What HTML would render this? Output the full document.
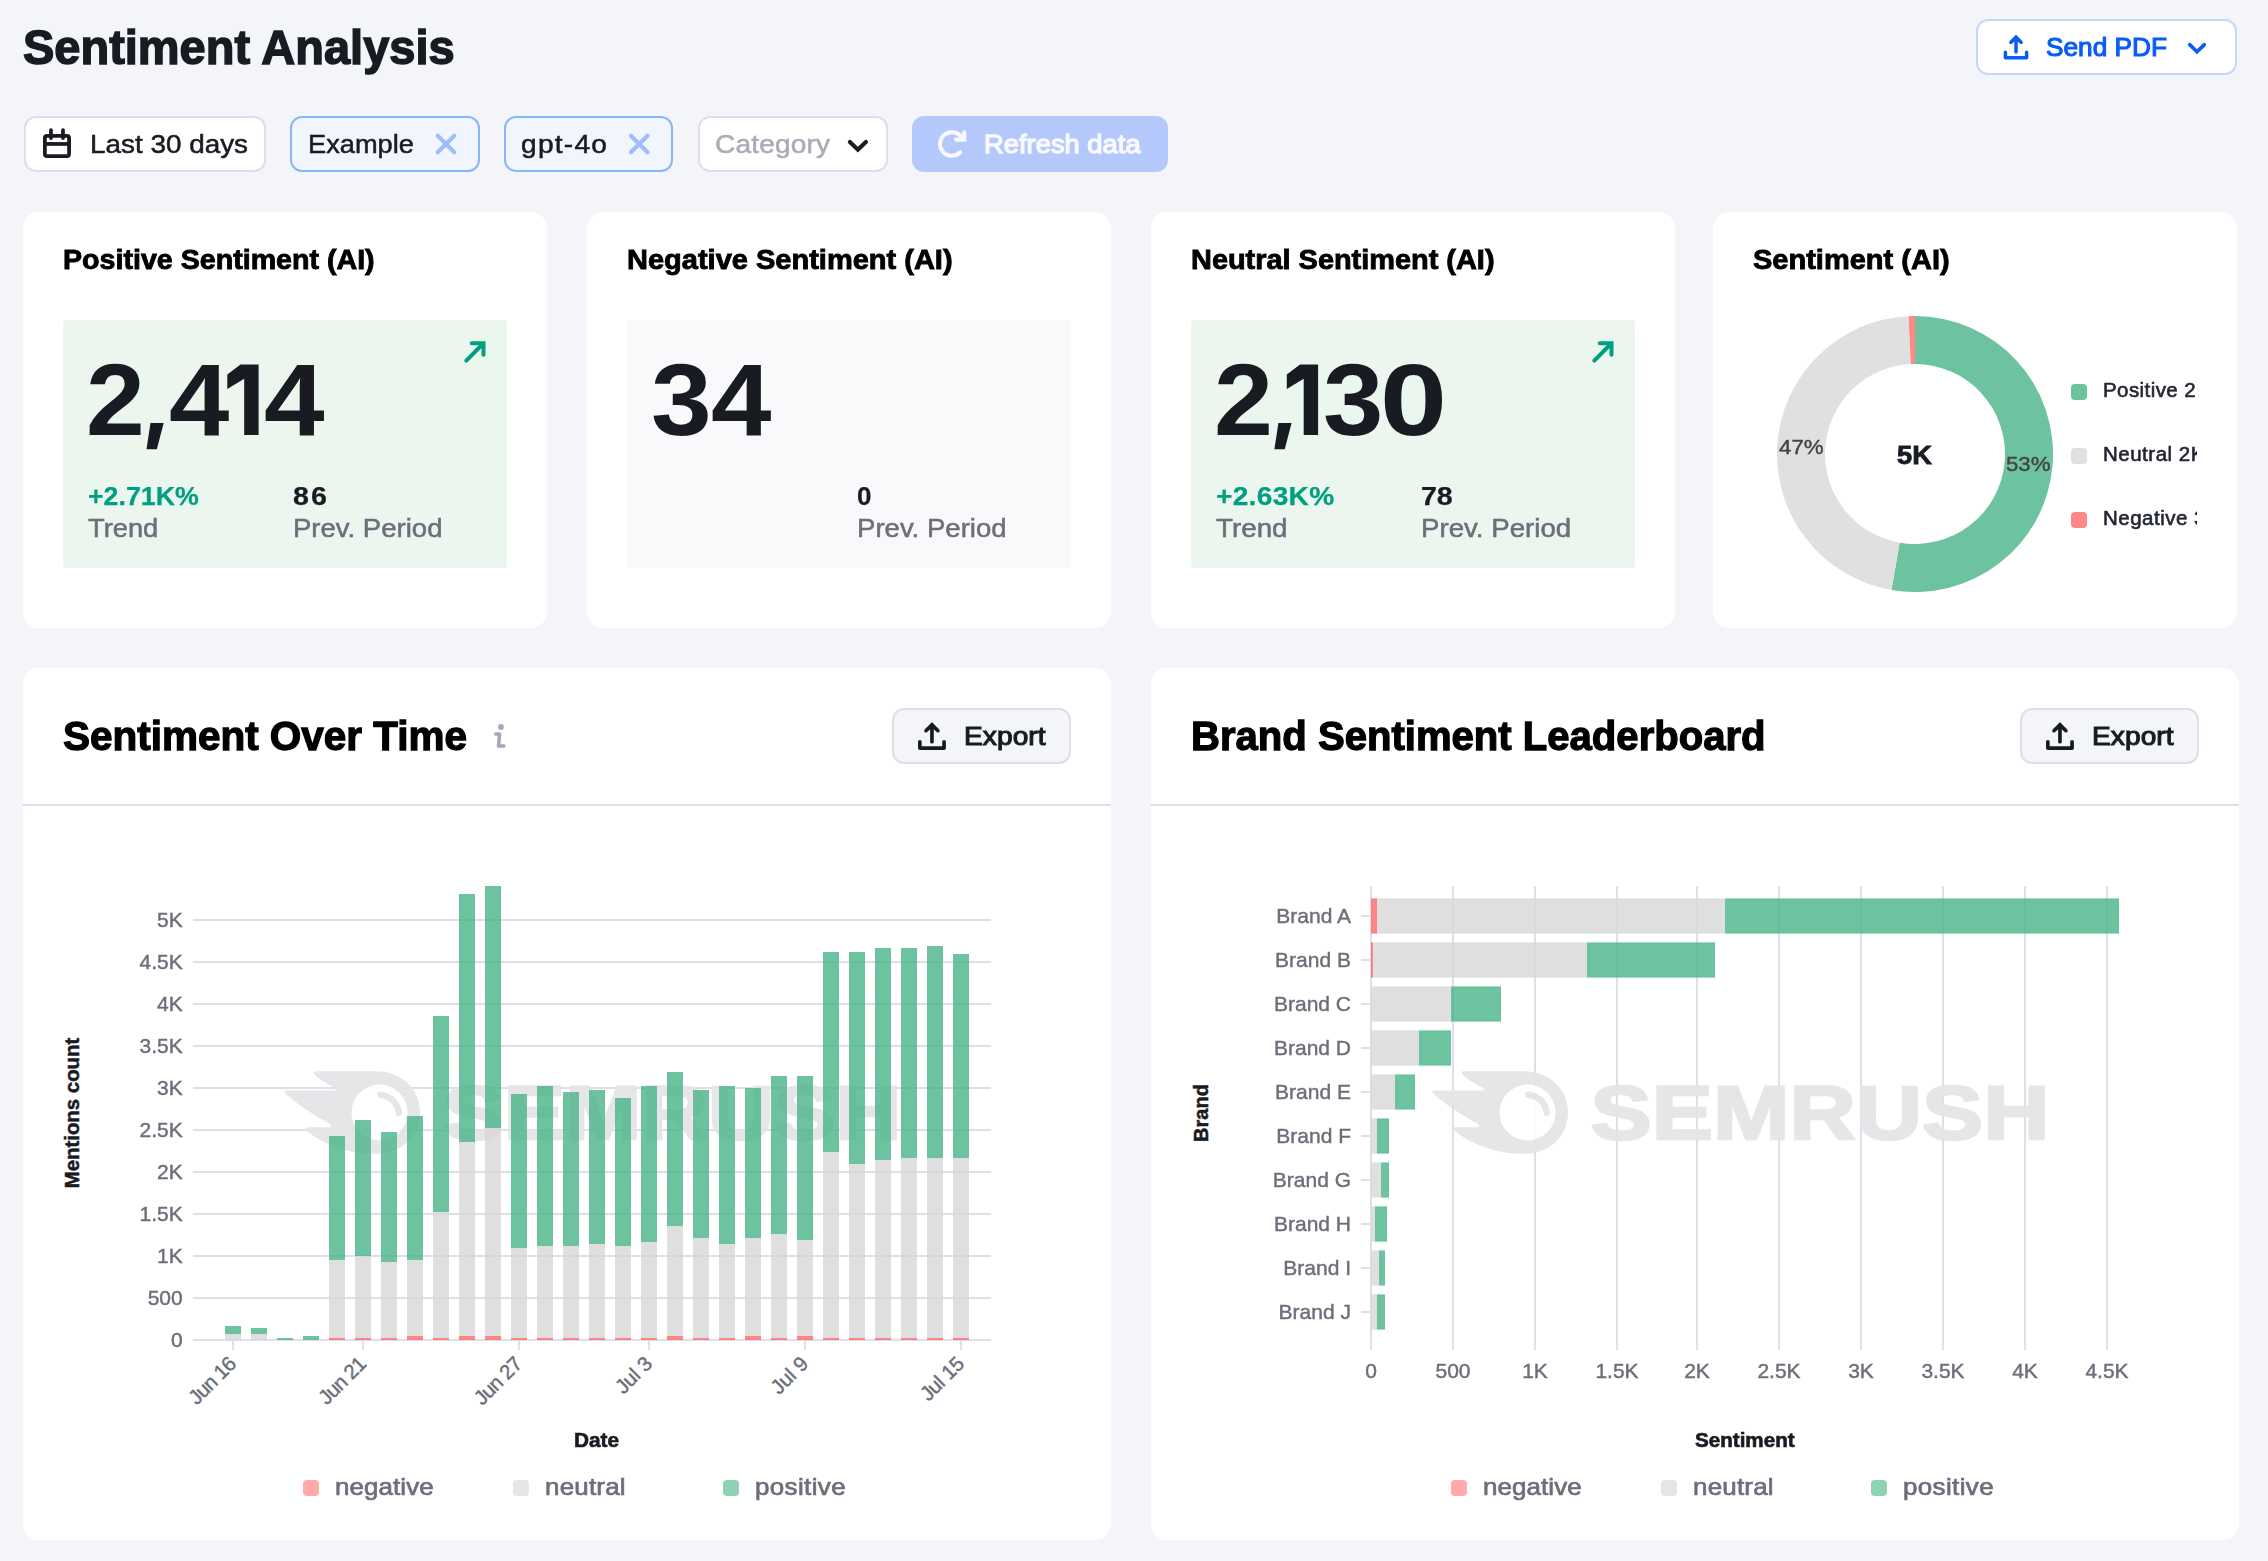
<!DOCTYPE html>
<html lang="en"><head><meta charset="utf-8"><title>Sentiment Analysis</title>
<style>
html,body{margin:0;padding:0}
body{width:2268px;height:1561px;background:#f4f5f9;position:relative;overflow:hidden;font-family:"Liberation Sans", sans-serif}
.b{position:absolute}
.t{position:absolute;white-space:pre;line-height:1}
svg.ov{position:absolute;left:0;top:0}
svg.ov text{font-family:"Liberation Sans", sans-serif}
</style></head><body>
<div class="b" style="left:1976px;top:19px;width:261px;height:56px;background:#fff;border-radius:12px;border:2px solid #c5d8fb;box-sizing:border-box;"></div>
<div class="b" style="left:23.5px;top:116px;width:242.0px;height:56px;background:#fff;border-radius:12px;border:2px solid #dedee8;box-sizing:border-box;"></div>
<div class="b" style="left:290px;top:116px;width:190px;height:56px;background:#f1f5fd;border-radius:12px;border:2px solid #8cb4fa;box-sizing:border-box;"></div>
<div class="b" style="left:504px;top:116px;width:169px;height:56px;background:#f1f5fd;border-radius:12px;border:2px solid #8cb4fa;box-sizing:border-box;"></div>
<div class="b" style="left:697.5px;top:116px;width:190.0px;height:56px;background:#fff;border-radius:12px;border:2px solid #dedee8;box-sizing:border-box;"></div>
<div class="b" style="left:912px;top:116px;width:256px;height:56px;background:#b4c8fb;border-radius:12px;"></div>
<div class="b" style="left:23px;top:212px;width:524px;height:416px;background:#fff;border-radius:16px;"></div>
<div class="b" style="left:587px;top:212px;width:524px;height:416px;background:#fff;border-radius:16px;"></div>
<div class="b" style="left:1151px;top:212px;width:524px;height:416px;background:#fff;border-radius:16px;"></div>
<div class="b" style="left:1713px;top:212px;width:524px;height:416px;background:#fff;border-radius:16px;"></div>
<div class="b" style="left:63px;top:320px;width:444px;height:248px;background:#eaf6ee;border-radius:4px;"></div>
<div class="b" style="left:627px;top:320px;width:444px;height:248px;background:#f9f9fb;border-radius:4px;"></div>
<div class="b" style="left:1191px;top:320px;width:444px;height:248px;background:#eaf6ee;border-radius:4px;"></div>
<div class="b" style="left:23px;top:668px;width:1088px;height:872px;background:#fff;border-radius:16px;"></div>
<div class="b" style="left:1151px;top:668px;width:1088px;height:872px;background:#fff;border-radius:16px;"></div>
<div class="b" style="left:23px;top:804px;width:1088px;height:2px;background:#dedfea;border-radius:0px;"></div>
<div class="b" style="left:1151px;top:804px;width:1088px;height:2px;background:#dedfea;border-radius:0px;"></div>
<div class="b" style="left:892px;top:708px;width:179px;height:56px;background:#f4f5f9;border-radius:12px;border:2px solid #dedfe9;box-sizing:border-box;"></div>
<div class="b" style="left:2020px;top:708px;width:179px;height:56px;background:#f4f5f9;border-radius:12px;border:2px solid #dedfe9;box-sizing:border-box;"></div>
<svg class="ov" width="2268" height="1561" viewBox="0 0 2268 1561">
<g transform="translate(2003.8,34.9) scale(0.875)" fill="none" stroke="#0a5cf5" stroke-width="4.0" stroke-linecap="round"><path d="M1.85 19.75V26H26.05V19.75" stroke-linejoin="round"/><path d="M13.95 3V19.6"/><path d="M7.7 8.9L13.95 2.65L20.2 8.9" stroke-linejoin="miter" stroke-linecap="butt"/><path d="M7.7 8.9L13.95 2.65L20.2 8.9" stroke-linejoin="miter" stroke-linecap="round" stroke-width="3.2"/></g>
<path d="M2189.7 44.6L2197 51.7L2204.3 44.6" fill="none" stroke="#0a5cf5" stroke-width="3.6" stroke-linecap="round" stroke-linejoin="miter"/>
<g fill="none" stroke="#191b23" stroke-width="3.75"><rect x="44.87" y="135.87" width="24.2" height="20.3" rx="2.2"/><path d="M44.8 143.95h24.4"/><path d="M50.96 130v8.1M63 130v8.1" stroke-linecap="round"/></g>
<path d="M437.7 135.7L454.3 152.3M454.3 135.7L437.7 152.3" stroke="#9dbefa" stroke-width="4.2" stroke-linecap="round" fill="none"/>
<path d="M630.9000000000001 135.7L647.5 152.3M647.5 135.7L630.9000000000001 152.3" stroke="#9dbefa" stroke-width="4.2" stroke-linecap="round" fill="none"/>
<path d="M849.9 142l8 7.7 8-7.7" fill="none" stroke="#191b23" stroke-width="4.2" stroke-linecap="round" stroke-linejoin="miter"/>
<g fill="none" stroke="#f8faff" stroke-width="4.1" stroke-linecap="round"><path d="M962.3 138.6A11.8 11.8 0 1 0 960.2 152.3"/><path d="M964.3 132.2V139.6H956" stroke-linejoin="miter"/></g>
<polygon points="150.5,423.0 163.7,423.0 156.8,449.2 146.5,449.2" fill="#191b23"/>
<polygon points="240.5,364.6 258.6,364.6 258.6,435.1 244.2,435.1 244.2,378.7 227.3,389.0 227.3,374.6" fill="#191b23"/>
<polygon points="1278.4,423.0 1291.6,423.0 1284.7,449.2 1274.4,449.2" fill="#191b23"/>
<polygon points="1300.0,364.6 1318.1,364.6 1318.1,435.1 1303.7,435.1 1303.7,378.7 1286.8,389.0 1286.8,374.6" fill="#191b23"/>
<path d="M466.3 360.7L483.3 343.5M471.8 343.3H483.5V354.8" fill="none" stroke="#009f80" stroke-width="4" stroke-linecap="round" stroke-linejoin="miter"/>
<path d="M1594.3 360.7L1611.3 343.5M1599.8 343.3H1611.5V354.8" fill="none" stroke="#009f80" stroke-width="4" stroke-linecap="round" stroke-linejoin="miter"/>
<path d="M1915.00 316.00A138 138 0 1 1 1891.44 589.97L1899.64 542.68A90 90 0 1 0 1915.00 364.00Z" fill="#6dc3a0"/>
<path d="M1891.44 589.97A138 138 0 0 1 1908.56 316.15L1910.80 364.10A90 90 0 0 0 1899.64 542.68Z" fill="#e0e0e0"/>
<path d="M1908.56 316.15A138 138 0 0 1 1915.00 316.00L1915.00 364.00A90 90 0 0 0 1910.80 364.10Z" fill="#ff8786"/>
<rect x="2071" y="384" width="16" height="16" rx="4" fill="#6dc3a0"/>
<rect x="2071" y="448" width="16" height="16" rx="4" fill="#e0e0e0"/>
<rect x="2071" y="512" width="16" height="16" rx="4" fill="#ff8786"/>
<g transform="translate(918,722.1) scale(1)" fill="none" stroke="#191b23" stroke-width="3.7" stroke-linecap="round"><path d="M1.85 19.75V26H26.05V19.75" stroke-linejoin="round"/><path d="M13.95 3V19.6"/><path d="M7.7 8.9L13.95 2.65L20.2 8.9" stroke-linejoin="miter" stroke-linecap="butt"/><path d="M7.7 8.9L13.95 2.65L20.2 8.9" stroke-linejoin="miter" stroke-linecap="round" stroke-width="2.9600000000000004"/></g>
<g transform="translate(2046,722.1) scale(1)" fill="none" stroke="#191b23" stroke-width="3.7" stroke-linecap="round"><path d="M1.85 19.75V26H26.05V19.75" stroke-linejoin="round"/><path d="M13.95 3V19.6"/><path d="M7.7 8.9L13.95 2.65L20.2 8.9" stroke-linejoin="miter" stroke-linecap="butt"/><path d="M7.7 8.9L13.95 2.65L20.2 8.9" stroke-linejoin="miter" stroke-linecap="round" stroke-width="2.9600000000000004"/></g>
<g fill="none" stroke="#a5a8b6" stroke-width="3.6" stroke-linecap="round" stroke-linejoin="round"><circle cx="500.96" cy="727" r="2.9" fill="#a5a8b6" stroke="none"/><path d="M495.7 734h3.9l-1.1 11.95h5.4"/></g>
<rect x="193" y="1339" width="798" height="2" fill="#dedfea"/>
<rect x="193" y="1297" width="798" height="2" fill="#dedfea"/>
<rect x="193" y="1255" width="798" height="2" fill="#dedfea"/>
<rect x="193" y="1213" width="798" height="2" fill="#dedfea"/>
<rect x="193" y="1171" width="798" height="2" fill="#dedfea"/>
<rect x="193" y="1129" width="798" height="2" fill="#dedfea"/>
<rect x="193" y="1087" width="798" height="2" fill="#dedfea"/>
<rect x="193" y="1045" width="798" height="2" fill="#dedfea"/>
<rect x="193" y="1003" width="798" height="2" fill="#dedfea"/>
<rect x="193" y="961" width="798" height="2" fill="#dedfea"/>
<rect x="193" y="919" width="798" height="2" fill="#dedfea"/>
<g transform="translate(284,1071.2)" fill="#e5e5e7" opacity="0.93"><path d="M31 0 H92 C118 0 136 18 136 41.3 C136 64.6 118 82.6 92 82.6 C62 82.6 38 72 21 58.5 L22.5 56 H45 Q49 55.5 46 52.8 C28 43 12 32 0.5 21.5 Q-0.5 19.3 2.5 19.3 H50 Q54 18.5 50 15.8 C44 13 36 9 30.5 3 Q29 0 31 0 Z"/><circle cx="95.5" cy="41.3" r="28" fill="#fff"/><path d="M96.5 23.5 C107 25 113.5 32 114.8 41.5" fill="none" stroke="#e5e5e7" stroke-width="6.5" stroke-linecap="round"/><text x="158.5" y="67.6" font-family='"Liberation Sans", sans-serif' font-weight="700" font-size="76" textLength="459" lengthAdjust="spacingAndGlyphs" stroke="#e5e5e7" stroke-width="2.4">SEMRUSH</text></g>
<g opacity="0.8"><rect x="225" y="1334" width="16" height="6" fill="#d8d8d8"/><rect x="225" y="1326" width="16" height="8" fill="#49b488"/><rect x="251" y="1334" width="16" height="6" fill="#d8d8d8"/><rect x="251" y="1328" width="16" height="6" fill="#49b488"/><rect x="277" y="1338" width="16" height="2" fill="#49b488"/><rect x="303" y="1336" width="16" height="4" fill="#49b488"/><rect x="329" y="1338" width="16" height="2" fill="#ff6968"/><rect x="329" y="1260" width="16" height="78" fill="#d8d8d8"/><rect x="329" y="1136" width="16" height="124" fill="#49b488"/><rect x="355" y="1338" width="16" height="2" fill="#ff6968"/><rect x="355" y="1256" width="16" height="82" fill="#d8d8d8"/><rect x="355" y="1120" width="16" height="136" fill="#49b488"/><rect x="381" y="1338" width="16" height="2" fill="#ff6968"/><rect x="381" y="1262" width="16" height="76" fill="#d8d8d8"/><rect x="381" y="1132" width="16" height="130" fill="#49b488"/><rect x="407" y="1336" width="16" height="4" fill="#ff6968"/><rect x="407" y="1260" width="16" height="76" fill="#d8d8d8"/><rect x="407" y="1116" width="16" height="144" fill="#49b488"/><rect x="433" y="1338" width="16" height="2" fill="#ff6968"/><rect x="433" y="1212" width="16" height="126" fill="#d8d8d8"/><rect x="433" y="1016" width="16" height="196" fill="#49b488"/><rect x="459" y="1336" width="16" height="4" fill="#ff6968"/><rect x="459" y="1142" width="16" height="194" fill="#d8d8d8"/><rect x="459" y="894" width="16" height="248" fill="#49b488"/><rect x="485" y="1336" width="16" height="4" fill="#ff6968"/><rect x="485" y="1128" width="16" height="208" fill="#d8d8d8"/><rect x="485" y="886" width="16" height="242" fill="#49b488"/><rect x="511" y="1338" width="16" height="2" fill="#ff6968"/><rect x="511" y="1248" width="16" height="90" fill="#d8d8d8"/><rect x="511" y="1094" width="16" height="154" fill="#49b488"/><rect x="537" y="1338" width="16" height="2" fill="#ff6968"/><rect x="537" y="1246" width="16" height="92" fill="#d8d8d8"/><rect x="537" y="1086" width="16" height="160" fill="#49b488"/><rect x="563" y="1338" width="16" height="2" fill="#ff6968"/><rect x="563" y="1246" width="16" height="92" fill="#d8d8d8"/><rect x="563" y="1092" width="16" height="154" fill="#49b488"/><rect x="589" y="1338" width="16" height="2" fill="#ff6968"/><rect x="589" y="1244" width="16" height="94" fill="#d8d8d8"/><rect x="589" y="1090" width="16" height="154" fill="#49b488"/><rect x="615" y="1338" width="16" height="2" fill="#ff6968"/><rect x="615" y="1246" width="16" height="92" fill="#d8d8d8"/><rect x="615" y="1098" width="16" height="148" fill="#49b488"/><rect x="641" y="1338" width="16" height="2" fill="#ff6968"/><rect x="641" y="1242" width="16" height="96" fill="#d8d8d8"/><rect x="641" y="1086" width="16" height="156" fill="#49b488"/><rect x="667" y="1336" width="16" height="4" fill="#ff6968"/><rect x="667" y="1226" width="16" height="110" fill="#d8d8d8"/><rect x="667" y="1072" width="16" height="154" fill="#49b488"/><rect x="693" y="1338" width="16" height="2" fill="#ff6968"/><rect x="693" y="1238" width="16" height="100" fill="#d8d8d8"/><rect x="693" y="1090" width="16" height="148" fill="#49b488"/><rect x="719" y="1338" width="16" height="2" fill="#ff6968"/><rect x="719" y="1244" width="16" height="94" fill="#d8d8d8"/><rect x="719" y="1086" width="16" height="158" fill="#49b488"/><rect x="745" y="1336" width="16" height="4" fill="#ff6968"/><rect x="745" y="1238" width="16" height="98" fill="#d8d8d8"/><rect x="745" y="1088" width="16" height="150" fill="#49b488"/><rect x="771" y="1338" width="16" height="2" fill="#ff6968"/><rect x="771" y="1234" width="16" height="104" fill="#d8d8d8"/><rect x="771" y="1076" width="16" height="158" fill="#49b488"/><rect x="797" y="1336" width="16" height="4" fill="#ff6968"/><rect x="797" y="1240" width="16" height="96" fill="#d8d8d8"/><rect x="797" y="1076" width="16" height="164" fill="#49b488"/><rect x="823" y="1338" width="16" height="2" fill="#ff6968"/><rect x="823" y="1152" width="16" height="186" fill="#d8d8d8"/><rect x="823" y="952" width="16" height="200" fill="#49b488"/><rect x="849" y="1338" width="16" height="2" fill="#ff6968"/><rect x="849" y="1164" width="16" height="174" fill="#d8d8d8"/><rect x="849" y="952" width="16" height="212" fill="#49b488"/><rect x="875" y="1338" width="16" height="2" fill="#ff6968"/><rect x="875" y="1160" width="16" height="178" fill="#d8d8d8"/><rect x="875" y="948" width="16" height="212" fill="#49b488"/><rect x="901" y="1338" width="16" height="2" fill="#ff6968"/><rect x="901" y="1158" width="16" height="180" fill="#d8d8d8"/><rect x="901" y="948" width="16" height="210" fill="#49b488"/><rect x="927" y="1338" width="16" height="2" fill="#ff6968"/><rect x="927" y="1158" width="16" height="180" fill="#d8d8d8"/><rect x="927" y="946" width="16" height="212" fill="#49b488"/><rect x="953" y="1338" width="16" height="2" fill="#ff6968"/><rect x="953" y="1158" width="16" height="180" fill="#d8d8d8"/><rect x="953" y="954" width="16" height="204" fill="#49b488"/></g>
<rect x="232" y="1340" width="2" height="10" fill="#dedfea"/>
<text transform="translate(237.5,1365) rotate(-45)" text-anchor="end" font-size="20.5" fill="#6c6e79" stroke="#6c6e79" stroke-width="0.4" textLength="57.5" lengthAdjust="spacing">Jun 16</text>
<rect x="362" y="1340" width="2" height="10" fill="#dedfea"/>
<text transform="translate(367.5,1365) rotate(-45)" text-anchor="end" font-size="20.5" fill="#6c6e79" stroke="#6c6e79" stroke-width="0.4" textLength="57.5" lengthAdjust="spacing">Jun 21</text>
<rect x="518" y="1340" width="2" height="10" fill="#dedfea"/>
<text transform="translate(523.5,1365) rotate(-45)" text-anchor="end" font-size="20.5" fill="#6c6e79" stroke="#6c6e79" stroke-width="0.4" textLength="58.5" lengthAdjust="spacing">Jun 27</text>
<rect x="648" y="1340" width="2" height="10" fill="#dedfea"/>
<text transform="translate(653.5,1365) rotate(-45)" text-anchor="end" font-size="20.5" fill="#6c6e79" stroke="#6c6e79" stroke-width="0.4" textLength="42.6" lengthAdjust="spacing">Jul 3</text>
<rect x="804" y="1340" width="2" height="10" fill="#dedfea"/>
<text transform="translate(809.5,1365) rotate(-45)" text-anchor="end" font-size="20.5" fill="#6c6e79" stroke="#6c6e79" stroke-width="0.4" textLength="43.2" lengthAdjust="spacing">Jul 9</text>
<rect x="960" y="1340" width="2" height="10" fill="#dedfea"/>
<text transform="translate(965.5,1365) rotate(-45)" text-anchor="end" font-size="20.5" fill="#6c6e79" stroke="#6c6e79" stroke-width="0.4" textLength="52.5" lengthAdjust="spacing">Jul 15</text>
<text transform="translate(79,1113) rotate(-90)" text-anchor="middle" font-size="20.4" font-weight="700" fill="#191b23" stroke="#191b23" stroke-width="0.5">Mentions count</text>
<rect x="303" y="1480" width="16" height="16" rx="4" fill="#ffa9a8"/>
<rect x="513" y="1480" width="16" height="16" rx="4" fill="#e6e6e6"/>
<rect x="723" y="1480" width="16" height="16" rx="4" fill="#8fd1b5"/>
<rect x="1451" y="1480" width="16" height="16" rx="4" fill="#ffa9a8"/>
<rect x="1661" y="1480" width="16" height="16" rx="4" fill="#e6e6e6"/>
<rect x="1871" y="1480" width="16" height="16" rx="4" fill="#8fd1b5"/>
<rect x="1370" y="886" width="2" height="464" fill="#dedfea"/>
<rect x="1452" y="886" width="2" height="464" fill="#dedfea"/>
<rect x="1534" y="886" width="2" height="464" fill="#dedfea"/>
<rect x="1616" y="886" width="2" height="464" fill="#dedfea"/>
<rect x="1696" y="886" width="2" height="464" fill="#dedfea"/>
<rect x="1778" y="886" width="2" height="464" fill="#dedfea"/>
<rect x="1860" y="886" width="2" height="464" fill="#dedfea"/>
<rect x="1942" y="886" width="2" height="464" fill="#dedfea"/>
<rect x="2024" y="886" width="2" height="464" fill="#dedfea"/>
<rect x="2106" y="886" width="2" height="464" fill="#dedfea"/>
<g transform="translate(1432,1071.2)" fill="#e5e5e7" opacity="0.93"><path d="M31 0 H92 C118 0 136 18 136 41.3 C136 64.6 118 82.6 92 82.6 C62 82.6 38 72 21 58.5 L22.5 56 H45 Q49 55.5 46 52.8 C28 43 12 32 0.5 21.5 Q-0.5 19.3 2.5 19.3 H50 Q54 18.5 50 15.8 C44 13 36 9 30.5 3 Q29 0 31 0 Z"/><circle cx="95.5" cy="41.3" r="28" fill="#fff"/><path d="M96.5 23.5 C107 25 113.5 32 114.8 41.5" fill="none" stroke="#e5e5e7" stroke-width="6.5" stroke-linecap="round"/><text x="158.5" y="67.6" font-family='"Liberation Sans", sans-serif' font-weight="700" font-size="76" textLength="459" lengthAdjust="spacingAndGlyphs" stroke="#e5e5e7" stroke-width="2.4">SEMRUSH</text></g>
<g opacity="0.8"><rect x="1371" y="898.4" width="6" height="35.2" fill="#ff6968"/><rect x="1377" y="898.4" width="348" height="35.2" fill="#d8d8d8"/><rect x="1725" y="898.4" width="394" height="35.2" fill="#49b488"/><rect x="1371" y="942.4" width="2" height="35.2" fill="#ff6968"/><rect x="1373" y="942.4" width="214" height="35.2" fill="#d8d8d8"/><rect x="1587" y="942.4" width="128" height="35.2" fill="#49b488"/><rect x="1371" y="986.4" width="80" height="35.2" fill="#d8d8d8"/><rect x="1451" y="986.4" width="50" height="35.2" fill="#49b488"/><rect x="1371" y="1030.4" width="48" height="35.2" fill="#d8d8d8"/><rect x="1419" y="1030.4" width="32" height="35.2" fill="#49b488"/><rect x="1371" y="1074.4" width="24" height="35.2" fill="#d8d8d8"/><rect x="1395" y="1074.4" width="20" height="35.2" fill="#49b488"/><rect x="1371" y="1118.4" width="6" height="35.2" fill="#d8d8d8"/><rect x="1377" y="1118.4" width="12" height="35.2" fill="#49b488"/><rect x="1371" y="1162.4" width="10" height="35.2" fill="#d8d8d8"/><rect x="1381" y="1162.4" width="8" height="35.2" fill="#49b488"/><rect x="1371" y="1206.4" width="4" height="35.2" fill="#d8d8d8"/><rect x="1375" y="1206.4" width="12" height="35.2" fill="#49b488"/><rect x="1371" y="1250.4" width="8" height="35.2" fill="#d8d8d8"/><rect x="1379" y="1250.4" width="6" height="35.2" fill="#49b488"/><rect x="1371" y="1294.4" width="6" height="35.2" fill="#d8d8d8"/><rect x="1377" y="1294.4" width="8" height="35.2" fill="#49b488"/></g>
<rect x="1361" y="915" width="10" height="2" fill="#dedfea"/>
<rect x="1361" y="959" width="10" height="2" fill="#dedfea"/>
<rect x="1361" y="1003" width="10" height="2" fill="#dedfea"/>
<rect x="1361" y="1047" width="10" height="2" fill="#dedfea"/>
<rect x="1361" y="1091" width="10" height="2" fill="#dedfea"/>
<rect x="1361" y="1135" width="10" height="2" fill="#dedfea"/>
<rect x="1361" y="1179" width="10" height="2" fill="#dedfea"/>
<rect x="1361" y="1223" width="10" height="2" fill="#dedfea"/>
<rect x="1361" y="1267" width="10" height="2" fill="#dedfea"/>
<rect x="1361" y="1311" width="10" height="2" fill="#dedfea"/>
<text transform="translate(1208,1113) rotate(-90)" text-anchor="middle" font-size="20" font-weight="700" fill="#191b23" stroke="#191b23" stroke-width="0.5">Brand</text>
</svg>
<div id="txt" style="position:absolute;left:0;top:0;width:2268px;height:1561px;will-change:transform">
<span class="t" style="left:23.0px;top:23.9px;font-size:48px;font-weight:700;color:#191b23;letter-spacing:-0.01px;-webkit-text-stroke:1.49px #191b23;transform:scaleX(0.979);transform-origin:0 0;">Sentiment Analysis</span>
<span class="t" style="left:2045.5px;top:34.0px;font-size:26px;color:#0a5cf5;letter-spacing:-0.01px;-webkit-text-stroke:1.1px #0a5cf5;transform:scaleX(1.01);transform-origin:0 0;">Send PDF</span>
<span class="t" style="left:89.5px;top:131.0px;font-size:26px;color:#191b23;-webkit-text-stroke:0.52px #191b23;transform:scaleX(1.072);transform-origin:0 0;">Last 30 days</span>
<span class="t" style="left:307.7px;top:131.0px;font-size:26px;color:#191b23;-webkit-text-stroke:0.52px #191b23;transform:scaleX(1.047);transform-origin:0 0;">Example</span>
<span class="t" style="left:521.0px;top:131.0px;font-size:26px;color:#191b23;letter-spacing:1.18px;-webkit-text-stroke:0.52px #191b23;transform:scaleX(1.08);transform-origin:0 0;">gpt-4o</span>
<span class="t" style="left:715.0px;top:131.0px;font-size:26px;color:#a9abb6;letter-spacing:0.15px;-webkit-text-stroke:0.52px #a9abb6;transform:scaleX(1.08);transform-origin:0 0;">Category</span>
<span class="t" style="left:984.4px;top:131.0px;font-size:26px;color:#f8faff;-webkit-text-stroke:1.3px #f8faff;transform:scaleX(1.052);transform-origin:0 0;">Refresh data</span>
<span class="t" style="left:63.0px;top:246.3px;font-size:28px;font-weight:700;color:#000;-webkit-text-stroke:0.87px #000;transform:scaleX(1.022);transform-origin:0 0;">Positive Sentiment (AI)</span>
<span class="t" style="left:626.5px;top:246.3px;font-size:28px;font-weight:700;color:#000;-webkit-text-stroke:0.87px #000;transform:scaleX(1.036);transform-origin:0 0;">Negative Sentiment (AI)</span>
<span class="t" style="left:1190.5px;top:246.3px;font-size:28px;font-weight:700;color:#000;letter-spacing:-0.01px;-webkit-text-stroke:0.87px #000;transform:scaleX(1.033);transform-origin:0 0;">Neutral Sentiment (AI)</span>
<span class="t" style="left:1753.0px;top:246.3px;font-size:28px;font-weight:700;color:#000;-webkit-text-stroke:0.87px #000;transform:scaleX(1.036);transform-origin:0 0;">Sentiment (AI)</span>
<span class="t" style="left:88.0px;top:482.8px;font-size:26px;font-weight:700;color:#009f80;-webkit-text-stroke:0.25px #009f80;transform:scaleX(1.029);transform-origin:0 0;">+2.71K%</span>
<span class="t" style="left:88.0px;top:515.0px;font-size:26px;color:#6c6e79;-webkit-text-stroke:0.52px #6c6e79;transform:scaleX(1.05);transform-origin:0 0;">Trend</span>
<span class="t" style="left:292.6px;top:482.8px;font-size:26px;font-weight:700;color:#191b23;letter-spacing:1.81px;-webkit-text-stroke:0.25px #191b23;transform:scaleX(1.1);transform-origin:0 0;">86</span>
<span class="t" style="left:292.6px;top:515.0px;font-size:26px;color:#6c6e79;-webkit-text-stroke:0.52px #6c6e79;transform:scaleX(1.059);transform-origin:0 0;">Prev. Period</span>
<span class="t" style="left:857.0px;top:482.8px;font-size:26px;font-weight:700;color:#191b23;-webkit-text-stroke:0.25px #191b23;">0</span>
<span class="t" style="left:857.0px;top:515.0px;font-size:26px;color:#6c6e79;-webkit-text-stroke:0.52px #6c6e79;transform:scaleX(1.06);transform-origin:0 0;">Prev. Period</span>
<span class="t" style="left:1215.5px;top:482.8px;font-size:26px;font-weight:700;color:#009f80;letter-spacing:0.28px;-webkit-text-stroke:0.25px #009f80;transform:scaleX(1.08);transform-origin:0 0;">+2.63K%</span>
<span class="t" style="left:1215.5px;top:515.0px;font-size:26px;color:#6c6e79;-webkit-text-stroke:0.52px #6c6e79;transform:scaleX(1.069);transform-origin:0 0;">Trend</span>
<span class="t" style="left:1420.5px;top:482.8px;font-size:26px;font-weight:700;color:#191b23;letter-spacing:-0.19px;-webkit-text-stroke:0.25px #191b23;transform:scaleX(1.1);transform-origin:0 0;">78</span>
<span class="t" style="left:1420.5px;top:515.0px;font-size:26px;color:#6c6e79;letter-spacing:0.01px;-webkit-text-stroke:0.52px #6c6e79;transform:scaleX(1.063);transform-origin:0 0;">Prev. Period</span>
<span class="t" style="left:1897.2px;top:441.5px;font-size:26px;font-weight:700;color:#191b23;letter-spacing:-0.01px;-webkit-text-stroke:0.81px #191b23;transform:scaleX(1.05);transform-origin:0 0;">5K</span>
<span class="t" style="left:1778.6px;top:436.4px;font-size:21px;color:#444;-webkit-text-stroke:0.42px #444;transform:scaleX(1.061);transform-origin:0 0;">47%</span>
<span class="t" style="left:2005.6px;top:452.6px;font-size:21px;color:#444;letter-spacing:-0.01px;-webkit-text-stroke:0.42px #444;transform:scaleX(1.059);transform-origin:0 0;">53%</span>
<span class="t" style="left:63.0px;top:715.8px;font-size:41px;font-weight:700;color:#000;-webkit-text-stroke:1.27px #000;transform:scaleX(0.987);transform-origin:0 0;">Sentiment Over Time</span>
<span class="t" style="left:1191.0px;top:715.8px;font-size:41px;font-weight:700;color:#000;letter-spacing:-0.01px;-webkit-text-stroke:1.27px #000;transform:scaleX(0.978);transform-origin:0 0;">Brand Sentiment Leaderboard</span>
<span class="t" style="left:963.5px;top:723.0px;font-size:26px;color:#191b23;letter-spacing:0.08px;-webkit-text-stroke:1.1px #191b23;transform:scaleX(1.08);transform-origin:0 0;">Export</span>
<span class="t" style="left:2091.5px;top:723.0px;font-size:26px;color:#191b23;letter-spacing:0.08px;-webkit-text-stroke:1.1px #191b23;transform:scaleX(1.08);transform-origin:0 0;">Export</span>
<span class="t" style="left:171.0px;top:1329.2px;font-size:21px;color:#6c6e79;-webkit-text-stroke:0.42px #6c6e79;">0</span>
<span class="t" style="left:147.7px;top:1287.2px;font-size:21px;color:#6c6e79;-webkit-text-stroke:0.42px #6c6e79;">500</span>
<span class="t" style="left:157.0px;top:1245.2px;font-size:21px;color:#6c6e79;-webkit-text-stroke:0.42px #6c6e79;">1K</span>
<span class="t" style="left:139.5px;top:1203.2px;font-size:21px;color:#6c6e79;-webkit-text-stroke:0.42px #6c6e79;">1.5K</span>
<span class="t" style="left:157.0px;top:1161.2px;font-size:21px;color:#6c6e79;-webkit-text-stroke:0.42px #6c6e79;">2K</span>
<span class="t" style="left:139.5px;top:1119.2px;font-size:21px;color:#6c6e79;-webkit-text-stroke:0.42px #6c6e79;">2.5K</span>
<span class="t" style="left:157.0px;top:1077.2px;font-size:21px;color:#6c6e79;-webkit-text-stroke:0.42px #6c6e79;">3K</span>
<span class="t" style="left:139.5px;top:1035.2px;font-size:21px;color:#6c6e79;-webkit-text-stroke:0.42px #6c6e79;">3.5K</span>
<span class="t" style="left:157.0px;top:993.2px;font-size:21px;color:#6c6e79;-webkit-text-stroke:0.42px #6c6e79;">4K</span>
<span class="t" style="left:139.5px;top:951.2px;font-size:21px;color:#6c6e79;-webkit-text-stroke:0.42px #6c6e79;">4.5K</span>
<span class="t" style="left:157.0px;top:909.2px;font-size:21px;color:#6c6e79;-webkit-text-stroke:0.42px #6c6e79;">5K</span>
<span class="t" style="left:574.0px;top:1430.1px;font-size:20px;font-weight:700;color:#191b23;-webkit-text-stroke:0.62px #191b23;transform:scaleX(1.04);transform-origin:0 0;">Date</span>
<span class="t" style="left:334.5px;top:1475.0px;font-size:24px;color:#6c6e79;letter-spacing:0.08px;-webkit-text-stroke:0.7px #6c6e79;transform:scaleX(1.08);transform-origin:0 0;">negative</span>
<span class="t" style="left:544.5px;top:1475.0px;font-size:24px;color:#6c6e79;letter-spacing:0.21px;-webkit-text-stroke:0.7px #6c6e79;transform:scaleX(1.08);transform-origin:0 0;">neutral</span>
<span class="t" style="left:754.5px;top:1475.0px;font-size:24px;color:#6c6e79;letter-spacing:0.36px;-webkit-text-stroke:0.7px #6c6e79;transform:scaleX(1.08);transform-origin:0 0;">positive</span>
<span class="t" style="left:1482.5px;top:1475.0px;font-size:24px;color:#6c6e79;letter-spacing:0.08px;-webkit-text-stroke:0.7px #6c6e79;transform:scaleX(1.08);transform-origin:0 0;">negative</span>
<span class="t" style="left:1692.5px;top:1475.0px;font-size:24px;color:#6c6e79;letter-spacing:0.21px;-webkit-text-stroke:0.7px #6c6e79;transform:scaleX(1.08);transform-origin:0 0;">neutral</span>
<span class="t" style="left:1902.5px;top:1475.0px;font-size:24px;color:#6c6e79;letter-spacing:0.36px;-webkit-text-stroke:0.7px #6c6e79;transform:scaleX(1.08);transform-origin:0 0;">positive</span>
<span class="t" style="left:1276.3px;top:904.8px;font-size:21px;color:#6c6e79;-webkit-text-stroke:0.42px #6c6e79;">Brand A</span>
<span class="t" style="left:1275.1px;top:948.8px;font-size:21px;color:#6c6e79;-webkit-text-stroke:0.42px #6c6e79;">Brand B</span>
<span class="t" style="left:1274.0px;top:992.8px;font-size:21px;color:#6c6e79;-webkit-text-stroke:0.42px #6c6e79;">Brand C</span>
<span class="t" style="left:1274.0px;top:1036.8px;font-size:21px;color:#6c6e79;-webkit-text-stroke:0.42px #6c6e79;">Brand D</span>
<span class="t" style="left:1275.1px;top:1080.8px;font-size:21px;color:#6c6e79;-webkit-text-stroke:0.42px #6c6e79;">Brand E</span>
<span class="t" style="left:1276.3px;top:1124.8px;font-size:21px;color:#6c6e79;-webkit-text-stroke:0.42px #6c6e79;">Brand F</span>
<span class="t" style="left:1272.8px;top:1168.8px;font-size:21px;color:#6c6e79;-webkit-text-stroke:0.42px #6c6e79;">Brand G</span>
<span class="t" style="left:1274.0px;top:1212.8px;font-size:21px;color:#6c6e79;-webkit-text-stroke:0.42px #6c6e79;">Brand H</span>
<span class="t" style="left:1283.3px;top:1256.8px;font-size:21px;color:#6c6e79;-webkit-text-stroke:0.42px #6c6e79;">Brand I</span>
<span class="t" style="left:1278.6px;top:1300.8px;font-size:21px;color:#6c6e79;-webkit-text-stroke:0.42px #6c6e79;">Brand J</span>
<span class="t" style="left:1365.2px;top:1360.2px;font-size:21px;color:#6c6e79;-webkit-text-stroke:0.42px #6c6e79;">0</span>
<span class="t" style="left:1435.5px;top:1360.2px;font-size:21px;color:#6c6e79;-webkit-text-stroke:0.42px #6c6e79;">500</span>
<span class="t" style="left:1522.2px;top:1360.2px;font-size:21px;color:#6c6e79;-webkit-text-stroke:0.42px #6c6e79;">1K</span>
<span class="t" style="left:1595.4px;top:1360.2px;font-size:21px;color:#6c6e79;-webkit-text-stroke:0.42px #6c6e79;">1.5K</span>
<span class="t" style="left:1684.2px;top:1360.2px;font-size:21px;color:#6c6e79;-webkit-text-stroke:0.42px #6c6e79;">2K</span>
<span class="t" style="left:1757.4px;top:1360.2px;font-size:21px;color:#6c6e79;-webkit-text-stroke:0.42px #6c6e79;">2.5K</span>
<span class="t" style="left:1848.2px;top:1360.2px;font-size:21px;color:#6c6e79;-webkit-text-stroke:0.42px #6c6e79;">3K</span>
<span class="t" style="left:1921.4px;top:1360.2px;font-size:21px;color:#6c6e79;-webkit-text-stroke:0.42px #6c6e79;">3.5K</span>
<span class="t" style="left:2012.2px;top:1360.2px;font-size:21px;color:#6c6e79;-webkit-text-stroke:0.42px #6c6e79;">4K</span>
<span class="t" style="left:2085.4px;top:1360.2px;font-size:21px;color:#6c6e79;-webkit-text-stroke:0.42px #6c6e79;">4.5K</span>
<span class="t" style="left:1695.0px;top:1430.1px;font-size:20px;font-weight:700;color:#191b23;-webkit-text-stroke:0.62px #191b23;transform:scaleX(1.03);transform-origin:0 0;">Sentiment</span>
<span class="t" style="left:86.4px;top:348.8px;font-size:102px;font-weight:700;color:#191b23;transform:scaleX(1.036);transform-origin:0 0">2</span>
<span class="t" style="left:168.9px;top:348.8px;font-size:102px;font-weight:700;color:#191b23;transform:scaleX(1.063);transform-origin:0 0">4</span>
<span class="t" style="left:264.2px;top:348.8px;font-size:102px;font-weight:700;color:#191b23;transform:scaleX(1.067);transform-origin:0 0">4</span>
<span class="t" style="left:651.4px;top:348.8px;font-size:102px;font-weight:700;color:#191b23;transform:scaleX(1.069);transform-origin:0 0">3</span>
<span class="t" style="left:711.1px;top:348.8px;font-size:102px;font-weight:700;color:#191b23;transform:scaleX(1.065);transform-origin:0 0">4</span>
<span class="t" style="left:1214.3px;top:348.8px;font-size:102px;font-weight:700;color:#191b23;transform:scaleX(1.039);transform-origin:0 0">2</span>
<span class="t" style="left:1323.4px;top:348.8px;font-size:102px;font-weight:700;color:#191b23;transform:scaleX(1.063);transform-origin:0 0">3</span>
<span class="t" style="left:1380.4px;top:348.8px;font-size:102px;font-weight:700;color:#191b23;transform:scaleX(1.181);transform-origin:0 0">0</span>
<div style="position:absolute;left:2103px;top:0;width:94px;height:700px;overflow:hidden"><span class="t" style="left:0;top:379.6px;font-size:20.5px;color:#232634;letter-spacing:0.42px;-webkit-text-stroke:0.6px #232634">Positive 2K</span><span class="t" style="left:0;top:443.6px;font-size:20.5px;color:#232634;letter-spacing:0.5px;-webkit-text-stroke:0.6px #232634">Neutral 2K</span><span class="t" style="left:0;top:508.2px;font-size:20.5px;color:#232634;letter-spacing:0.5px;-webkit-text-stroke:0.6px #232634">Negative 34</span></div>
</div>
</body></html>
